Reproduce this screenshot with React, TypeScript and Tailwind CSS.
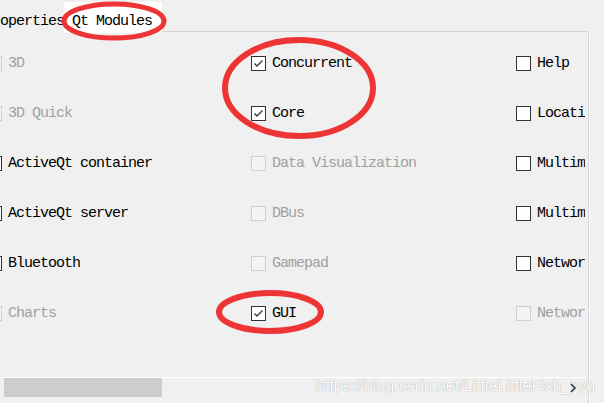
import React from "react";

type Item = { label: string; checked?: boolean; disabled?: boolean };

const cols: Item[][] = [
  [
    { label: "3D", disabled: true },
    { label: "3D Quick", disabled: true },
    { label: "ActiveQt container" },
    { label: "ActiveQt server" },
    { label: "Bluetooth" },
    { label: "Charts", disabled: true },
  ],
  [
    { label: "Concurrent", checked: true },
    { label: "Core", checked: true },
    { label: "Data Visualization", disabled: true },
    { label: "DBus", disabled: true },
    { label: "Gamepad", disabled: true },
    { label: "GUI", checked: true },
  ],
  [
    { label: "Help" },
    { label: "Location" },
    { label: "Multimedia" },
    { label: "Multimedia Widgets" },
    { label: "Network" },
    { label: "Network Authorization", disabled: true },
  ],
];

function Check({ item }: { item: Item }) {
  return (
    <div className="h-[50px] flex items-center gap-[6px] whitespace-nowrap">
      <div
        className={
          "w-[15px] h-[15px] shrink-0 border flex items-center justify-center " +
          (item.disabled ? "border-[#cfcfcf] bg-[#f4f4f4]" : "border-[#333333] bg-white")
        }
      >
        {item.checked && (
          <svg width="13" height="13" viewBox="0 0 13 13">
            <polyline points="2.5,6.5 5,9 10.5,3.5" fill="none" stroke="#3a3a3a" strokeWidth="1.4" />
          </svg>
        )}
      </div>
      <span className={item.disabled ? "text-[#a0a0a0]" : "text-black"}>{item.label}</span>
    </div>
  );
}

export default function App() {
  return (
    <div
      className="relative w-[604px] h-[403px] overflow-hidden bg-[#f0f0f0] text-[15px] tracking-[-1px] leading-none"
      style={{ fontFamily: '"Liberation Mono", monospace' }}
    >
      {/* tab bar */}
      <div className="flex items-end h-[33px]">
        <div className="ml-[-16px] w-[80px] h-[33px] flex items-center pt-[9px] text-black whitespace-nowrap">
          Properties
        </div>
        <div className="w-[98px] h-[31px] bg-white flex items-center pl-[8px] pt-[7px] text-black whitespace-nowrap">
          Qt Modules
        </div>
        <div className="w-[426px] h-[1px] mb-[1px] bg-[#d4d4d4]" />
      </div>

      {/* pane */}
      <div className="flex h-[370px]">
        <div className="w-[585px] flex flex-col overflow-hidden">
          <div className="flex-1 pt-[5px] overflow-hidden">
            <div className="ml-[-13px] grid grid-cols-[264px_265px_200px]">
              {cols.map((c, i) => (
                <div key={i} className="flex flex-col">
                  {c.map((it) => (
                    <Check key={it.label} item={it} />
                  ))}
                </div>
              ))}
            </div>
          </div>
          <div className="h-[26px] border-t border-white flex items-start relative">
            <div className="ml-[4px] w-[158px] h-[19px] bg-[#cdcdcd]" />
          </div>
        </div>
        <div className="w-[3px]" />
        <div className="w-[1px] bg-[#d4d4d4]" />
        <div className="w-[1px] bg-white" />
      </div>

      {/* watermark */}
      <div
        className="absolute left-[316px] top-[378px] text-[16px] tracking-normal text-white whitespace-nowrap"
        style={{ fontFamily: '"Liberation Sans", Arial, sans-serif', textShadow: "0 0 1px rgba(110,110,110,0.8)" }}
      >
        https://blog.csdn.net/LittleLittleFish_xyg
      </div>
      <svg className="absolute left-[569px] top-[383px] pointer-events-none" width="8" height="10" viewBox="0 0 8 10">
        <polyline points="2,1 6,5 2,9" fill="none" stroke="#333" strokeWidth="1.6" />
      </svg>

      {/* annotations */}
      <svg className="absolute inset-0 pointer-events-none" width="604" height="403">
        <ellipse cx="114" cy="21" rx="50" ry="17" fill="none" stroke="#ee3535" strokeWidth="5" />
        <ellipse cx="299" cy="88" rx="74" ry="48" fill="none" stroke="#ee3535" strokeWidth="6" />
        <ellipse cx="270" cy="312" rx="51" ry="19" fill="none" stroke="#ee3535" strokeWidth="6" />
      </svg>
    </div>
  );
}
